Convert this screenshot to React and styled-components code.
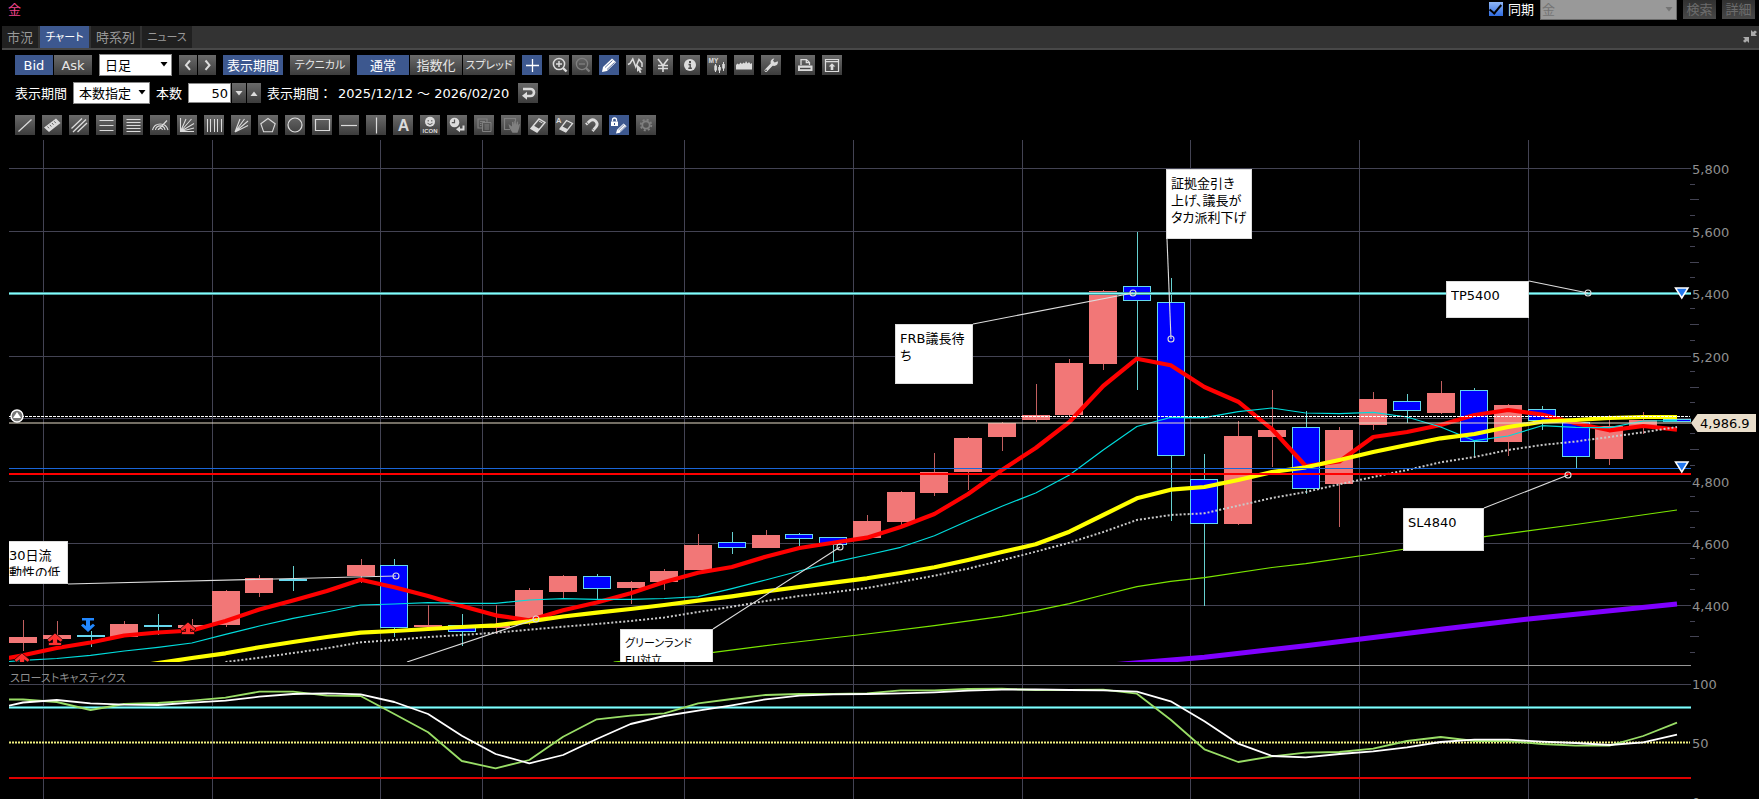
import React, { useLayoutEffect, useRef, useState } from "react";
import styled, { createGlobalStyle, css } from "styled-components";

const GlobalStyle = createGlobalStyle`
  * { box-sizing: border-box; }
  html, body { margin: 0; background: #000; }
  body, button, input, select {
    font-family: "DejaVu Sans", "Noto Sans CJK JP", sans-serif;
    font-size: 13px;
    line-height: 17px;
  }
`;

const blue = "#3d588f";

const Page = styled.div`
  display: flex;
  flex-direction: column;
  height: 100vh;
  overflow: hidden;
  background: #000;
  color: #fff;
`;

/* ---------- header ---------- */

const TitleBar = styled.header`
  display: flex;
  justify-content: space-between;
  height: 26px;
  padding: 0 4px 0 8px;
`;

const Title = styled.h1`
  margin: 0;
  font-size: 13px;
  font-weight: 400;
  line-height: 20px;
  color: #f0468c;
`;

const SyncArea = styled.div`
  display: flex;
  align-items: flex-start;
  gap: 6px;
`;

const SyncLabel = styled.label`
  display: flex;
  align-items: center;
  gap: 5px;
  height: 18px;
`;

const SyncBox = styled.input`
  appearance: none;
  width: 14px;
  height: 14px;
  margin: 0;
  background: linear-gradient(#8fb6f5, #2f6be0);
  display: grid;
  place-items: center;
  &:checked::after {
    content: "";
    width: 5px;
    height: 10px;
    margin-bottom: 3px;
    border: solid #000;
    border-width: 0 2px 2px 0;
    transform: rotate(40deg);
  }
`;

const SelectWrap = styled.span`
  position: relative;
  display: inline-flex;
  width: ${(p) => p.$w}px;
  height: ${(p) => p.$h || 22}px;
  svg {
    position: absolute;
    right: 4px;
    top: calc(50% - 3px);
    pointer-events: none;
    color: ${(p) => (p.$muted ? "#747474" : "#000")};
  }
`;

const Select = styled.select`
  appearance: none;
  width: 100%;
  height: 100%;
  padding: 0 5px;
  border: 1px solid #888;
  border-radius: 0;
  background: #fff;
  color: #000;
  opacity: 1;
  &:disabled {
    padding: 0 1px;
    border: 1px solid #6a6a6a;
    border-top: 0;
    background: #999;
    color: #747474;
  }
`;

const FaintButton = styled.button`
  width: 33px;
  height: 19px;
  padding: 0;
  border: 0;
  background: linear-gradient(#303030, #484848);
  color: #6c6c6c;
`;

const TabBar = styled.nav`
  display: flex;
  justify-content: space-between;
  align-items: flex-end;
  height: 24px;
  margin-left: 2px;
  background: #333;
  border-bottom: 2px solid #484848;
`;

const Tabs = styled.div`
  display: flex;
  gap: 2px;
  height: 22px;
`;

const Tab = styled.a`
  display: flex;
  align-items: center;
  justify-content: center;
  width: ${(p) => p.$w}px;
  background: ${(p) => (p.$on ? blue : "#202020")};
  color: ${(p) => (p.$on ? "#fff" : "#999")};
  font-size: ${(p) => (p.$kana ? 11 : 13)}px;
  font-feature-settings: ${(p) => (p.$kana ? '"palt"' : "normal")};
  text-decoration: none;
  white-space: nowrap;
`;

const ShrinkButton = styled.button`
  width: 18px;
  height: 22px;
  padding: 4px 2px;
  border: 0;
  background: none;
`;

/* ---------- toolbar ---------- */

const Toolbar = styled.div`
  display: flex;
  flex-direction: column;
  gap: 6px;
  padding: 4px 15px;
`;

const Row = styled.div`
  display: flex;
  align-items: center;
  gap: ${(p) => p.$gap || 7}px;
  height: 22px;
  margin-top: ${(p) => p.$top || 0}px;
  white-space: nowrap;
`;

const Group = styled.div`
  display: flex;
  gap: ${(p) => p.$gap || 1}px;
  margin-left: ${(p) => p.$left || 0}px;
`;

const surface = css`
  border: 0;
  padding: 0;
  height: 20px;
  background: ${(p) => (p.$on ? blue : "linear-gradient(#6a6a6a, #3c3c3c)")};
  color: ${(p) => (p.$on ? "#fff" : "#e6e6e6")};
`;

const TextButton = styled.button`
  ${surface}
  width: ${(p) => p.$w}px;
  font-size: ${(p) => (p.$kana ? 11 : 13)}px;
  font-feature-settings: ${(p) => (p.$kana ? '"palt"' : "normal")};
  white-space: nowrap;
`;

const IconButton = styled.button`
  ${surface}
  display: grid;
  place-items: center;
  width: ${(p) => p.$w || 20}px;
  color: ${(p) => (p.disabled ? "#808080" : p.$on ? "#fff" : "#dcdcdc")};
  svg { display: block; }
`;

const BarCount = styled.input`
  width: 43px;
  height: 20px;
  padding: 0 2px;
  border: 1px solid #888;
  background: #fff;
  color: #000;
  text-align: right;
`;

const Spinner = styled.div`
  display: flex;
  gap: 1px;
`;

const RangeText = styled.span`
  margin-right: ${(p) => p.$after || 0}px;
`;

const Arrow = ({ up }) => (
  <svg width="8" height="5" viewBox="0 0 8 5">
    <path d={up ? "M.5 5h7L4 .5z" : "M.5 0h7L4 4.500z"} fill="currentColor" />
  </svg>
);

function Glyph({ children, w = 20 }) {
  return (
    <svg width={w} height="20" viewBox={`0 0 ${w} 20`} fill="none" stroke="currentColor" strokeWidth="1.2">
      {children}
    </svg>
  );
}

const S = { fill: "currentColor", stroke: "none" };
const iconFont = { fontWeight: 700, fontFamily: "Liberation Sans, sans-serif" };

const icons = {
  prev: <path d="M11 5.500l-4 4.700 4 4.700" strokeWidth="2" />,
  next: <path d="M7.500 5.500l4 4.700-4 4.700" strokeWidth="2" />,
  cross: <path d="M10.500 4v13M4 10.500h13" strokeWidth="1.300" />,
  zoomIn: (
    <>
      <circle cx="10" cy="9" r="5.600" strokeWidth="1.500" />
      <path d="M10 6v6M7 9h6" strokeWidth="1.500" />
      <path d="M14 13l3.500 3.500" strokeWidth="2.400" />
    </>
  ),
  zoomOut: (
    <>
      <circle cx="10" cy="9" r="5.600" strokeWidth="1.300" />
      <path d="M7 9h6" strokeWidth="1.300" />
      <path d="M14 13l3.500 3.500" strokeWidth="2.200" />
    </>
  ),
  pencil: (
    <>
      <path d="M3 17l1-5L13 3.500l4 3.800L8 16z" {...S} />
      <path d="M6 12.500l7.500-7M8 14.500l7.500-7" stroke={blue} strokeWidth=".8" />
    </>
  ),
  wave: (
    <>
      <path d="M2 9.500l2-1L6.800 4l3 8L13 4.500l3 3.500v4" strokeWidth="1.500" />
      <path d="M11 9.500l5.500 5-2.300.2 1.300 2.700-1.700.7-1.200-2.700-1.600 1.500z" {...S} />
    </>
  ),
  yen: <path d="M5 4l5 6.500L15 4M10 10.500V17M5 10.500h10M5 13.500h10" strokeWidth="1.600" />,
  info: (
    <>
      <circle cx="10" cy="10" r="6" {...S} />
      <path d="M10 6v2" stroke="#4c4c4c" strokeWidth="2" />
      <path d="M8.500 9.500h1.700V13M8.300 13.300h3.600" stroke="#4c4c4c" strokeWidth="1.400" />
    </>
  ),
  my: (
    <>
      <text x="1.500" y="8" fontSize="6.500" {...iconFont} {...S}>MY</text>
      <path d="M8.500 9v8M12.500 10v8M16.500 7v9" strokeWidth="1" />
      <path d="M7.300 10.500h2.600v5H7.300zM11.200 12h2.600v3.500h-2.600zM15.200 9h2.600v4.500h-2.600z" {...S} />
    </>
  ),
  area: <path d="M2 14.500V10l1.500-1.500L5 9.500l1.500-2L8 9l1.500-1.500L11 8.500 12 6l1.500 2.500L15 7l1.500 2L18 8v6.500z" {...S} />,
  wrench: (
    <>
      <path d="M5 15.500l6.500-6.800" strokeWidth="3" strokeLinecap="round" />
      <path d="M16.800 6.200a3.700 3.700 0 1 1-3.500-2.700l-1.300 2.200 1.700 1.700z" {...S} />
      <circle cx="5" cy="15.400" r=".8" fill="#444" stroke="none" />
    </>
  ),
  print: (
    <>
      <path d="M6 10V4.600h5.500l3 3V10M11.300 4.600v3h3" strokeWidth="1.300" />
      <path d="M3 10.500h14.500V16H3z" {...S} />
      <path d="M5 13.500h10.500" stroke="#444" strokeWidth="1.400" />
    </>
  ),
  upload: (
    <>
      <path d="M3.500 4.500h13v12h-13zM3.500 6.700h13" strokeWidth="1.200" />
      <path d="M10 8.300l3.300 3.300h-2V15H8.700v-3.400h-2z" {...S} />
    </>
  ),
  back: (
    <>
      <path d="M5 6h7.500a3.200 3.200 0 0 1 0 7H8" strokeWidth="2.600" />
      <path d="M9 8.800v8l-5-4z" {...S} />
    </>
  ),
  line: <path d="M3.500 16.500l13-12" />,
  ruler: (
    <>
      <path d="M2 12.500L14 3.500l4.500 4.500L7 17z" {...S} />
      <path d="M5.500 11.500l1.500 1.800M7.800 9.800l1.500 1.800M10 8l1.500 1.800M12.300 6.300l1.500 1.800" stroke="#555" strokeWidth=".9" />
    </>
  ),
  channel: <path d="M2.500 13.500L13 3.500M4 17L17 4.500M8.500 17L18 8" strokeWidth="1.300" />,
  h3: <path d="M3.500 5.500h14M3.500 10.500h14M3.500 15.500h14" />,
  h5: <path d="M3.500 4.500h14M3.500 7.500h14M3.500 10.500h14M3.500 13.500h14M3.500 16.500h14" strokeWidth="1" />,
  arcs: <path d="M2.500 15a8 8 0 0 1 15.500 0M5.500 15a4.800 4.800 0 0 1 9.500 0M8 15a2.300 2.300 0 0 1 4.500 0M8.500 14.500L17 5.500" strokeWidth="1.100" />,
  fanBox: <path d="M3.500 3v13.500H17M3.500 16.500L9 4M3.500 16.500L14.500 4M3.500 16.500L17 8.500M3.500 16.500L17 13" strokeWidth="1.100" />,
  v5: <path d="M3.500 4v13M6.500 4v13M10.500 4v13M13.500 4v13M17.500 4v13" strokeWidth="1" />,
  fan: <path d="M4 17L9 4M4 17L13.500 4M4 17L17 6M4 17l13-6.500" strokeWidth="1.100" />,
  pentagon: <path d="M10 3.500l7.200 5.300-2.800 8H5.600l-2.800-8z" strokeWidth="1.100" />,
  circle: <circle cx="10" cy="10" r="7" />,
  rect: <path d="M3.500 4.500h14v11h-14z" />,
  hline: <path d="M2 10.500h16" />,
  vline: <path d="M10.500 2.500v16" />,
  text: <text x="10.500" y="16" textAnchor="middle" fontSize="16" {...iconFont} {...S}>A</text>,
  icon: (
    <>
      <circle cx="10" cy="6.800" r="5" {...S} />
      <path d="M8.200 5v1.500M11.800 5v1.500M7.500 8.300q2.500 2.500 5 0" stroke="#555" strokeWidth="1" />
      <text x="10" y="18.200" textAnchor="middle" fontSize="6" {...iconFont} {...S}>ICON</text>
    </>
  ),
  clockBack: (
    <>
      <circle cx="7.500" cy="7.500" r="4.800" {...S} />
      <path d="M7.500 4.500v3.200H4.800" stroke="#555" strokeWidth="1.200" />
      <path d="M16.500 10.500v4H12" strokeWidth="2" />
      <path d="M13 11.300v6l-4-3z" {...S} />
    </>
  ),
  copy: (
    <>
      <path d="M8 13H4V4h9v3" />
      <path d="M8.500 7.500h8.500v9H8.500zM10.500 10h4.500M10.500 12h4.500M10.500 14h4.500M6 6.500h5M6 8.500h1.500M6 10.500h1.500" strokeWidth="1" />
    </>
  ),
  hand: (
    <>
      <path d="M9 14.500H3.500v-11h11v3" />
      <path d="M7.500 9l3.500 2.500V7l1.300-.3.600 3 .5-3.700h1.300l.4 3.700L16 6.500l1.200.3-.2 3.700 1-1.800 1 .4-1 4.400-1.500 4.300h-5L8.500 13z" {...S} />
    </>
  ),
  eraser: (
    <>
      <path d="M3 13.500L11 4l6 3.500-8 9.500z" strokeWidth="1.400" />
      <path d="M3 13.500L5.500 10.500l6 3.500L9 17z" {...S} />
      <path d="M11 6l3.500 2" strokeWidth="1" />
    </>
  ),
  eraserA: (
    <>
      <path d="M5 14l6.500-8.500 6 3-6.700 8.500z" strokeWidth="1.300" />
      <path d="M5 14l2-2.800 6 3-2.200 2.800z" {...S} />
      <text x="1" y="8" fontSize="7.500" {...iconFont} {...S}>A</text>
    </>
  ),
  magnet: (
    <>
      <path d="M4 9.500l4.200-3.800a4.300 4.300 0 0 1 6 6L10.500 16" strokeWidth="2.800" />
      <path d="M4.500 7l2 2.500M9.500 13l2.300 2.300" stroke="#555" strokeWidth=".9" />
    </>
  ),
  lockPencil: (
    <>
      <path d="M2 6.500h7V11H2z" {...S} />
      <path d="M3.500 6.500V5a2 2 0 0 1 4 0v1.500" strokeWidth="1.300" />
      <path d="M5.500 8v2" stroke={blue} strokeWidth="1" />
      <path d="M7 18.500l1-3.800 6.600-6.300 3 2.900-6.800 6.400z" {...S} />
      <path d="M9.500 15l5.500-5.300M11 16.500l5.500-5.300" stroke={blue} strokeWidth=".7" />
    </>
  ),
  gear: (
    <>
      <circle cx="10" cy="10" r="3.700" strokeWidth="1.800" />
      <circle cx="10" cy="10" r="5.300" strokeWidth="1.800" strokeDasharray="2.080 2.080" />
    </>
  ),
};

function Tool({ name, label, ...rest }) {
  return (
    <IconButton type="button" aria-label={label} {...rest}>
      <Glyph w={rest.$w}>{icons[name]}</Glyph>
    </IconButton>
  );
}

const drawTools = [
  ["line", "トレンドライン"], ["ruler", "計測"], ["channel", "チャネル"], ["h3", "水平3本"], ["h5", "リトレースメント"],
  ["arcs", "アーク"], ["fanBox", "ギャンファン"], ["v5", "タイムゾーン"], ["fan", "ファン"], ["pentagon", "多角形"],
  ["circle", "円"], ["rect", "四角形"], ["hline", "水平線"], ["vline", "垂直線"], ["text", "テキスト"],
  ["icon", "アイコン"], ["clockBack", "履歴"], ["copy", "複製", "off"], ["hand", "移動", "off"], ["eraser", "消去"],
  ["eraserA", "全消去"], ["magnet", "マグネット"], ["lockPencil", "描画ロック", "on"], ["gear", "設定", "off"],
];

/* ---------- chart data ---------- */

// [slot, high, bodyTop, bodyBottom, low, rising]
const candles = [
  [0, 620, 637, 643, 651, 1], [1, 621, 635, 639, 639, 1], [2, 631, 635, 637, 647, 0], [3, 621, 624, 637, 637, 1],
  [4, 614, 625, 627, 635, 0], [5, 619, 625, 628, 628, 1], [6, 590, 591, 625, 627, 1], [7, 575, 578, 593, 597, 1],
  [8, 566, 579, 581, 591, 0], [10, 559, 565, 576, 583, 1], [11, 559, 565, 628, 637, 0], [12, 605, 625, 627, 627, 1],
  [13, 614, 625, 632, 646, 0], [14, 605, 626, 628, 634, 1], [15, 588, 590, 620, 625, 1], [16, 575, 576, 592, 598, 1],
  [17, 574, 576, 589, 600, 0], [18, 581, 582, 588, 604, 1], [19, 569, 571, 582, 590, 1], [20, 534, 545, 570, 570, 1],
  [21, 532, 542, 548, 554, 0], [22, 530, 535, 548, 548, 1], [23, 533, 534, 539, 546, 0], [24, 537, 537, 545, 563, 0],
  [25, 515, 521, 538, 538, 1], [26, 491, 492, 522, 525, 1], [27, 453, 472, 493, 496, 1], [28, 437, 438, 472, 490, 1],
  [29, 422, 423, 437, 451, 1], [30, 384, 415, 420, 422, 1], [31, 359, 363, 415, 416, 1], [32, 290, 291, 364, 370, 1],
  [33, 232, 286, 301, 390, 0], [34, 278, 302, 456, 521, 0], [35, 454, 479, 524, 606, 0], [36, 421, 436, 524, 525, 1],
  [37, 390, 430, 437, 467, 1], [38, 411, 427, 489, 494, 0], [39, 427, 430, 484, 527, 1], [40, 392, 399, 425, 430, 1],
  [41, 394, 401, 411, 423, 0], [42, 381, 393, 413, 414, 1], [43, 388, 390, 442, 457, 0], [44, 404, 405, 442, 456, 1],
  [45, 406, 409, 421, 430, 0], [46, 420, 422, 457, 468, 0], [47, 415, 426, 459, 465, 1], [48, 412, 420, 426, 434, 1],
  [49, 419, 419, 422, 422, 0],
];

const LEAD = -0.42;
const series = (start, list, lead) => [
  ...(lead ? [[LEAD, lead]] : []),
  ...list.map((y, i) => [start + i, y]),
];

const fastMA = series(0, [655.3, 648, 642.5, 635.5, 632.5, 630.5, 621, 609.5, 600.5, 591, 579.7, 587.3, 596, 606, 615.3, 620.3, 610.3, 602.5, 593.3, 582, 572.7, 567, 556.7, 548, 542.7, 537.7, 527, 514, 494, 470, 448, 422, 386, 358.7, 365.3, 387, 401.7, 429, 466, 461.5, 437, 432, 425, 415, 410, 414.5, 423.3, 430.3, 426, 429.7], 658);
const slowMA = series(3, [668, 663, 658, 653.3, 647.3, 642, 637, 632.7, 631, 629, 627, 625.3, 621.3, 616.5, 612.7, 609, 605, 600.7, 596.3, 591.3, 587, 582.7, 578.3, 573, 567.3, 560, 552, 544.3, 531.7, 515, 498.3, 489.7, 487, 480, 472, 467.3, 460, 452, 445, 438.3, 434, 427, 421.7, 420, 418, 417, 417]);
const midMA = series(0, [660.3, 658.5, 655.3, 651, 647.3, 643, 634.3, 626, 618.3, 612, 605, 604, 602.7, 603.3, 603.3, 600, 598.7, 599.3, 599.3, 598.5, 596.7, 588.7, 580, 571, 562.3, 555, 547.3, 535.7, 520.7, 506.3, 493, 475, 450, 426.5, 417.3, 417.7, 411.7, 408, 413, 413.7, 412.3, 417, 427, 440.7, 436, 425.7, 427.3, 427.7, 421, 420.7], 661.5);
const dottedMA = series(6, [662, 657.7, 653, 648.3, 642.3, 640, 637, 635, 632.7, 629.7, 626.7, 624, 621, 617.5, 612, 606.7, 601, 596, 592.3, 588, 582, 575.7, 568.7, 560.3, 551.7, 542.7, 532, 520, 515, 513.3, 505.7, 498, 492, 484.3, 477, 470, 462.3, 457, 450, 445, 441.5, 437, 432.3, 427]);
const greenMA = [[17.5, 662], [20.4, 652.7], [22.4, 644], [25, 634], [27, 625.7], [29, 616.3], [30, 610.7], [31, 603.7], [32, 595], [33, 586.7], [34, 581.3], [35, 577.7], [37, 567.5], [38, 563.7], [40, 554], [43.3, 536.7], [46, 524.5], [49, 510]];
const purpleMA = [[32.4, 664.5], [35, 657.3], [38, 645.7], [40, 637.5], [42, 629.3], [44.6, 619], [49, 604]];
const stochK = series(0, [699.5, 702, 710, 704, 703, 700.7, 697.7, 691.7, 691.7, 695.7, 696, 714, 732.3, 761, 768.3, 760, 736.7, 719.3, 715.7, 713.3, 703.3, 699, 695, 694, 694, 693.3, 690.3, 690.3, 689, 688.7, 690, 690, 689.7, 693.7, 719.7, 749.3, 762, 756.3, 752.7, 752, 748.7, 741, 737, 741, 741, 744, 745.7, 745.7, 736, 722.7], 699.5);
const stochD = series(0, [702.5, 700, 703.3, 704.7, 705, 702.7, 700.7, 696.7, 694, 693.3, 694.3, 702, 714, 735.7, 754, 763.3, 755, 739, 724, 716, 710.7, 705.3, 699.3, 695.7, 694.3, 694, 693.3, 692.3, 690.7, 689.7, 689.3, 690, 690.3, 691.7, 701.3, 721.3, 743.7, 756, 757.3, 754, 751.3, 747.3, 742, 739.7, 739.7, 741.7, 743, 745, 742.3, 734.7], 705.7);

const dateLines = [43, 212, 380, 482, 684, 853, 1022, 1190, 1359, 1528];
const priceLines = [168, 231, 293, 356, 418, 481, 543, 605];
const priceLabels = { 168: "5,800", 231: "5,600", 293: "5,400", 356: "5,200", 481: "4,800", 543: "4,600", 605: "4,400" };

const notes = [
  { x: 9, y: 541, w: 59, h: 43, lines: ["30日流", "動性の低"], to: [396, 576], from: [68, 584], cut: true },
  { x: 1166, y: 169, w: 86, h: 70, lines: ["証拠金引き", "上げ、議長が", "タカ派利下げ"], to: [1171, 339], from: [1167, 239] },
  { x: 895, y: 324, w: 78, h: 60, lines: ["FRB議長待", "ち"], to: [1133, 293], from: [973, 324] },
  { x: 1446, y: 281, w: 83, h: 37, lines: ["TP5400"], to: [1588, 293], from: [1529, 281] },
  { x: 1403, y: 508, w: 81, h: 43, lines: ["SL4840"], to: [1568, 475], from: [1484, 508] },
  { x: 620, y: 629, w: 93, h: 43, lines: ["グリーンランド", "EU対立"], to: [840, 547], from: [713, 629], kana: true },
];

/* ---------- chart ---------- */

const TOP = 140;

const ChartArea = styled.main`
  position: relative;
  flex: 1;
  min-height: 0;
  overflow: hidden;
`;

const Drawing = styled.svg`
  display: block;
  width: 100%;
  height: 659px;
`;

const PaneTitle = styled.text`
  font-size: 11px;
  font-feature-settings: "palt";
`;

const NoteLayer = styled.div`
  position: absolute;
  top: 0;
  left: 0;
  right: 0;
  height: 522px;
  overflow: hidden;
`;

const NoteCard = styled.div`
  position: absolute;
  width: ${(p) => p.$w}px;
  height: ${(p) => p.$h}px;
  padding: ${(p) => (p.$cut ? "5px 0 7px" : "5px 4px 7px")};
  border: 1px solid #ddd;
  border-left-width: ${(p) => (p.$cut ? 0 : 1)}px;
  background: #fff;
  color: #000;
  font-size: ${(p) => (p.$kana ? 11 : 13)}px;
  font-feature-settings: "palt";
  white-space: nowrap;
`;

const NoteText = styled.p`
  height: 100%;
  margin: 0;
  overflow: hidden;
`;

function Chart() {
  const ref = useRef(null);
  const [width, setWidth] = useState(1759);
  useLayoutEffect(() => {
    const measure = () => setWidth(ref.current.clientWidth);
    measure();
    const watcher = new ResizeObserver(measure);
    watcher.observe(ref.current);
    return () => watcher.disconnect();
  }, []);

  const right = width - 69;
  const scale = (right - 36) / 1654;
  const sx = (px) => 23 + (px - 23) * scale;
  const cx = (slot) => 23 + (slot * (right - 36)) / 49;
  const pts = (list) => list.map(([s, y]) => `${cx(s).toFixed(1)},${y}`).join(" ");
  const bodyW = Math.round(28 * scale);

  return (
    <ChartArea ref={ref}>
      <Drawing viewBox={`0 ${TOP} ${width} 659`} preserveAspectRatio="xMinYMin slice">
        <defs>
          <clipPath id="price"><rect x="9" y={TOP} width={right - 8} height="522" /></clipPath>
          <clipPath id="stoch"><rect x="9" y="666" width={right - 8} height="140" /></clipPath>
        </defs>

        <g fill="#434353" shapeRendering="crispEdges">
          {dateLines.map((x) => <rect key={x} x={Math.round(sx(x))} y={TOP} width="1" height="659" />)}
          {[...priceLines, 684].map((y) => <rect key={y} x="9" y={y} width={right - 8} height="1" />)}
          {Array.from({ length: 31 }, (_, i) => i + 1).filter((i) => i % 4).map((i) => (
            <rect key={i} x={right} y={Math.round(168 + i * 15.61)} width={i % 2 ? 5 : 9} height="1" />
          ))}
        </g>
        <rect x="9" y="665" width={right - 8} height="1" fill="#969696" />

        <g clipPath="url(#price)">
          <g shapeRendering="crispEdges">
            {candles.map(([s, hi, top, bottom, lo, rising]) => {
              const c = Math.round(cx(s));
              const thin = bottom - top < 3;
              return (
                <g key={s}>
                  <rect x={c} y={hi} width="1" height={Math.max(lo - hi, 1)} fill={rising ? "#c25f5f" : "#66d0d0"} />
                  {rising ? (
                    <rect x={c - bodyW / 2} y={top} width={bodyW} height={bottom - top} fill="#f27777" />
                  ) : (
                    <rect
                      x={c - bodyW / 2 + 0.5} y={top + 0.5} width={bodyW - 1} height={thin ? 1 : bottom - top - 1}
                      fill={thin ? "#3f9fff" : "#0000ff"} stroke="#66d8ee" strokeWidth="1"
                    />
                  )}
                </g>
              );
            })}
          </g>

          <g fill="none" strokeLinejoin="round">
            <polyline points={pts(greenMA)} stroke="#7be600" strokeWidth="1.200" />
            <polyline points={pts(purpleMA)} stroke="#8000ff" strokeWidth="5" />
            <polyline points={pts(fastMA)} stroke="#ff0000" strokeWidth="4.200" />
            <polyline points={pts(midMA)} stroke="#00dcdc" strokeWidth="1.200" />
            <polyline points={pts(dottedMA)} stroke="#c8c8c8" strokeWidth="2" strokeDasharray="2 2" />
            <polyline points={pts(slowMA)} stroke="#ffff00" strokeWidth="4.200" />
          </g>

          <g shapeRendering="crispEdges">
            <rect x="9" y="292" width={right} height="3" fill="#4f9c9c" />
            <rect x="9" y="293" width={right} height="1" fill="#80ffff" />
            <rect x="9" y="422" width={right} height="2" fill="#e6dcc8" fillOpacity=".5" />
            <rect x="9" y="468" width={right} height="1" fill="#1a66d9" />
            <rect x="9" y="473" width={right} height="2" fill="#ff0000" />
            <path d={`M9 416.500H${right}`} stroke="#fff" strokeDasharray="3 1" />
          </g>

          <g stroke="#ddd" fill="none" strokeWidth="1.100">
            {[...notes, { from: [407, 662], to: [536, 619] }].map((n, i) => (
              <g key={i}>
                <path d={`M${sx(n.from[0])} ${n.from[1]}L${sx(n.to[0])} ${n.to[1]}`} />
                <circle cx={sx(n.to[0])} cy={n.to[1]} r="3" />
              </g>
            ))}
          </g>

          {[[22, 653], [55, 633], [188, 622]].map(([x, y]) => (
            <path key={x} d={`M${sx(x)} ${y}l8 7-2.500 2-3-2.200v2.700h4v3h-13v-3h4v-2.700l-3 2.200-2.500-2z`} fill="#ff3030" stroke="#000" strokeWidth=".7" />
          ))}
          <path d={`M${sx(88)} 632l-7-6.500 2-1.700 3 2.200v-5.500h-4V618h12v2.500h-4v5.500l3-2.200 2 1.700z`} fill="#2288ff" />
        </g>

        <circle cx="17" cy="416" r="6" fill="#777" stroke="#fff" strokeWidth="1.400" />
        <path d="M17 412l4 6h-8z" fill="#fff" />
        {[288, 462].map((y) => (
          <path key={y} d={`M${right - 14.500} ${y}h12.500l-6.200 10z`} fill="#2277ee" stroke="#fff" strokeWidth="1.500" />
        ))}

        <g clipPath="url(#stoch)">
          <path d={`M9 742.500H${right}`} stroke="#f0f080" strokeWidth="2" strokeDasharray="2 1" />
          <rect x="9" y="777" width={right} height="2" fill="#e00000" />
          <rect x="9" y="706" width={right} height="3" fill="#3f8c8c" />
          <rect x="9" y="707" width={right} height="1" fill="#80ffff" />
          <g fill="none" strokeWidth="1.800" strokeLinejoin="round">
            <polyline points={pts(stochK)} stroke="#99dd66" />
            <polyline points={pts(stochD)} stroke="#fff" />
          </g>
        </g>

        <g fill="#8f8f8f" fontSize="13">
          {priceLines.filter((y) => priceLabels[y]).map((y) => <text key={y} x={right + 2} y={y + 6}>{priceLabels[y]}</text>)}
          <text x={right + 2} y="689">100</text>
          <text x={right + 2} y="748">50</text>
          <text x={right + 2} y="807">0</text>
          <PaneTitle x="10" y="682">スローストキャスティクス</PaneTitle>
        </g>

        <path d={`M${right + 1} 423l6.500-9H${right + 66}v18H${right + 7.5}z`} fill="#eadfcc" />
        <text x={right + 10} y="428" fontSize="13" fill="#000">4,986.9</text>
      </Drawing>

      <NoteLayer>
        {notes.map((n) => (
          <NoteCard
            key={n.x} $w={n.w} $h={n.h} $cut={n.cut} $kana={n.kana}
            style={{ left: sx(n.from[0]) - (n.from[0] - n.x), top: n.y - TOP }}
          >
            <NoteText>
              {n.lines.map((line, i) => <React.Fragment key={line}>{i > 0 && <br />}{line}</React.Fragment>)}
            </NoteText>
          </NoteCard>
        ))}
      </NoteLayer>
    </ChartArea>
  );
}

export default function App() {
  return (
    <Page>
      <GlobalStyle />
      <TitleBar>
        <Title>金</Title>
        <SyncArea>
          <SyncLabel><SyncBox type="checkbox" defaultChecked />同期</SyncLabel>
          <SelectWrap $w={137} $h={20} $muted>
            <Select disabled aria-label="銘柄"><option>金</option></Select>
            <Arrow />
          </SelectWrap>
          <Group $gap={6}>
            <FaintButton type="button">検索</FaintButton>
            <FaintButton type="button">詳細</FaintButton>
          </Group>
        </SyncArea>
      </TitleBar>

      <TabBar>
        <Tabs>
          <Tab href="#market" $w={36}>市況</Tab>
          <Tab href="#chart" $w={49} $on $kana>チャート</Tab>
          <Tab href="#series" $w={49}>時系列</Tab>
          <Tab href="#news" $w={50} $kana>ニュース</Tab>
        </Tabs>
        <ShrinkButton type="button" aria-label="縮小">
          <svg width="14" height="14" viewBox="0 0 14 14" fill="#aaa">
            <path d="M8 0v6h6l-2-2 2-2-2-1.500-2 1.500zM6 13V7H0l2 2-2 2 2 1.700 2-1.700z" />
          </svg>
        </ShrinkButton>
      </TabBar>

      <Toolbar>
        <Row>
          <Group>
            <TextButton type="button" $w={38} $on>Bid</TextButton>
            <TextButton type="button" $w={38}>Ask</TextButton>
          </Group>
          <SelectWrap $w={73}>
            <Select aria-label="足種"><option>日足</option></Select>
            <Arrow />
          </SelectWrap>
          <Group>
            <Tool name="prev" label="前へ" $w={18} />
            <Tool name="next" label="次へ" $w={18} />
          </Group>
          <TextButton type="button" $w={60} $on>表示期間</TextButton>
          <TextButton type="button" $w={60} $kana>テクニカル</TextButton>
          <Group>
            <TextButton type="button" $w={52} $on>通常</TextButton>
            <TextButton type="button" $w={52}>指数化</TextButton>
            <TextButton type="button" $w={52} $kana>スプレッド</TextButton>
          </Group>
          <Tool name="cross" label="十字線" $on />
          <Group $gap={3}>
            <Tool name="zoomIn" label="拡大" />
            <Tool name="zoomOut" label="縮小表示" disabled />
          </Group>
          <Tool name="pencil" label="描画" $on />
          <Tool name="wave" label="選択" />
          <Tool name="yen" label="注文" />
          <Tool name="info" label="情報" />
          <Tool name="my" label="マイチャート" />
          <Tool name="area" label="チャート種別" />
          <Tool name="wrench" label="ツール" />
          <Group $gap={7} $left={7}>
            <Tool name="print" label="印刷" />
            <Tool name="upload" label="別画面" />
          </Group>
        </Row>

        <Row $gap={6}>
          <RangeText>表示期間</RangeText>
          <SelectWrap $w={77}>
            <Select aria-label="表示期間"><option>本数指定</option></Select>
            <Arrow />
          </SelectWrap>
          <label htmlFor="bars">本数</label>
          <Group $gap={1}>
            <BarCount id="bars" defaultValue="50" />
            <Spinner>
              <IconButton type="button" aria-label="減らす" $w={14}><Arrow /></IconButton>
              <IconButton type="button" aria-label="増やす" $w={14}><Arrow up /></IconButton>
            </Spinner>
          </Group>
          <RangeText>表示期間：</RangeText>
          <RangeText $after={3}>2025/12/12 ～ 2026/02/20</RangeText>
          <Tool name="back" label="元に戻す" />
        </Row>

        <Row $top={4}>
          {drawTools.map(([name, label, state]) => (
            <Tool key={name} name={name} label={label} $on={state === "on"} disabled={state === "off"} />
          ))}
        </Row>
      </Toolbar>

      <Chart />
    </Page>
  );
}
